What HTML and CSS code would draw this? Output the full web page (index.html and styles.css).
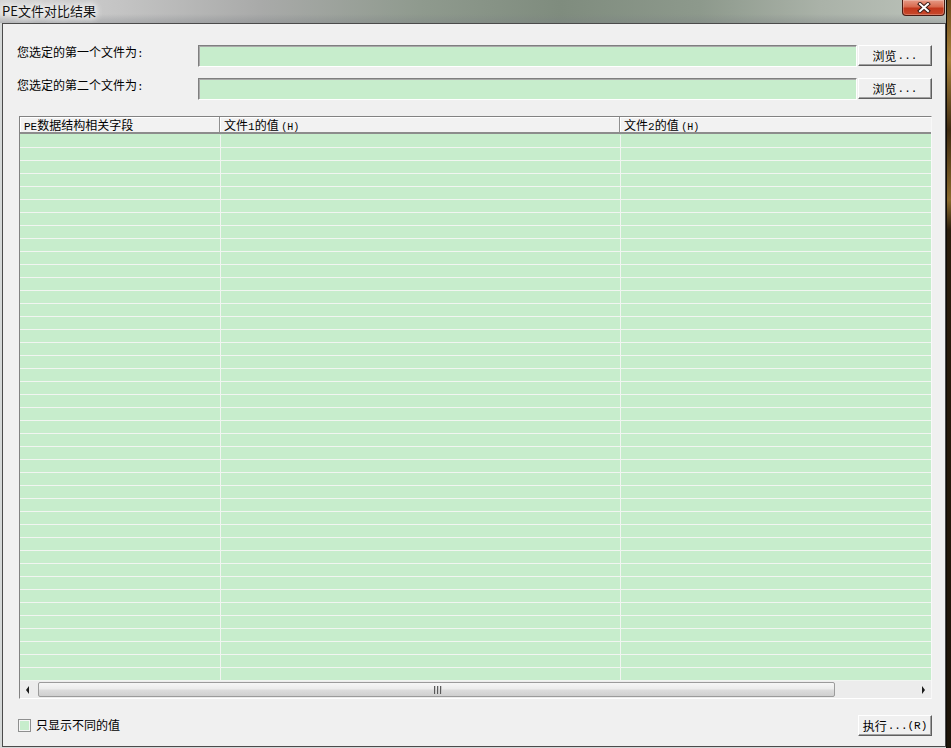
FILE: index.html
```html
<!DOCTYPE html>
<html lang="zh-CN">
<head>
<meta charset="utf-8">
<title>PE文件对比结果</title>
<link rel="stylesheet" href="styles.css">
</head>
<body>
<div class="screen">
  <div class="window">
    <div class="titlebar">
      <span class="title">PE文件对比结果</span>
      <button class="close" aria-label="关闭">
        <svg width="14" height="11" viewBox="0 0 14 11">
          <path d="M3 2 L11 9 M11 2 L3 9" stroke="#3a1a14" stroke-width="4" stroke-linecap="square" fill="none"/>
          <path d="M3 2 L11 9 M11 2 L3 9" stroke="#ffffff" stroke-width="2" stroke-linecap="square" fill="none"/>
        </svg>
      </button>
    </div>
    <div class="frame">
      <div class="client">
        <div class="file-row">
          <span class="label">您选定的第一个文件为<span class="hw">:</span></span>
          <div class="field"></div>
          <button class="btn">浏览<span class="hw dots">...</span></button>
        </div>
        <div class="file-row second">
          <span class="label">您选定的第二个文件为<span class="hw">:</span></span>
          <div class="field"></div>
          <button class="btn">浏览<span class="hw dots">...</span></button>
        </div>

        <div class="listview">
          <div class="lv-head">
            <div class="hcell c1"><span class="hw">PE</span>数据结构相关字段</div>
            <div class="hcell c2">文件<span class="hw">1</span>的值 <span class="hw small">(H)</span></div>
            <div class="hcell c3">文件<span class="hw">2</span>的值 <span class="hw small">(H)</span></div>
          </div>
          <div class="lv-body">
            <div class="col c1"></div>
            <div class="col c2"></div>
            <div class="col c3"></div>
          </div>
          <div class="hscroll">
            <div class="arrow left"></div>
            <div class="track">
              <div class="thumb"><span class="grip"><i></i><i></i><i></i></span></div>
            </div>
            <div class="arrow right"></div>
          </div>
        </div>

        <div class="footer">
          <label class="check"><span class="box"></span><span class="check-label">只显示不同的值</span></label>
          <button class="btn">执行<span class="hw dots">...</span><span class="hw">(R)</span></button>
        </div>
      </div>
    </div>
  </div>
  <div class="desktop"></div>
</div>
</body>
</html>
```

FILE: styles.css
```css
html, body {
  margin: 0;
  padding: 0;
}

body {
  width: 951px;
  height: 748px;
  overflow: hidden;
  font-family: "Noto Sans CJK SC", "Noto Sans", sans-serif;
  font-size: 12px;
  color: #000;
}

.screen {
  display: flex;
  width: 951px;
  height: 748px;
  background: #2a1d0c;
}

.window {
  width: 946px;
  height: 748px;
  display: flex;
  flex-direction: column;
  background: #3b3f44;
}

/* ---------- title bar ---------- */
.titlebar {
  height: 23px;
  flex: none;
  display: flex;
  justify-content: space-between;
  align-items: flex-start;
  background:
    linear-gradient(to bottom, rgba(255,255,255,0) 0, rgba(255,255,255,0) 14px, rgba(120,124,130,0.35) 23px),
    linear-gradient(to right, #d6d6d6 0, #c4c4c4 120px, #a9aaa9 260px, #8f9a8e 420px, #7f8c7e 560px, #8d998c 700px, #aab2a8 820px, #bcc3bb 946px);
}

.title {
  margin: 2px 0 0 2px;
  font-size: 13px;
  line-height: 17px;
  color: #111;
  text-shadow: 0 0 6px #fff, 0 0 8px #fff, 0 0 10px #fff;
}

.close {
  width: 43px;
  height: 16px;
  margin-right: 1px;
  padding: 0;
  border: 1px solid #4a1b12;
  border-top: none;
  border-radius: 0 0 4px 4px;
  background: linear-gradient(to bottom, #e69a86 0, #d86a4f 45%, #c2371c 55%, #c84a2c 100%);
  box-shadow: inset 0 0 0 1px rgba(255,255,255,0.25);
  display: flex;
  align-items: center;
  justify-content: center;
}

.close svg {
  display: block;
}

/* ---------- frame & client ---------- */
.frame {
  flex: 1;
  display: flex;
  padding-left: 2px;
  padding-bottom: 1px;
  background: #d5d8d8;
}

.client {
  width: 942px;
  border: 1px solid #4b4b4b;
  background: #f0f0f0;
  padding: 21px 0 0 14px;
  display: flex;
  flex-direction: column;
}

.hw {
  font-family: "Liberation Mono", monospace;
  font-size: 11px;
}

.hw.small {
  font-size: 10px;
}

.file-row {
  display: flex;
  align-items: center;
  height: 22px;
}

.file-row.second {
  margin-top: 11px;
}

.label {
  width: 181px;
  align-self: flex-start;
  line-height: 14px;
  white-space: nowrap;
}

.field {
  width: 657px;
  height: 20px;
  border: 1px solid;
  border-color: #7f7f7f #ffffff #ffffff #7f7f7f;
  box-shadow: inset 1px 1px 0 #a9a9a9;
  background: #c7edcc;
}

.btn {
  margin: 0 0 0 1px;
  width: 74px;
  height: 21px;
  align-self: flex-start;
  padding: 0;
  border: 1px solid;
  border-color: #ffffff #5f5f5f #5f5f5f #ffffff;
  box-shadow: inset -1px -1px 0 #a0a0a0;
  background: #f0f0f0;
  font-family: "Noto Sans CJK SC", sans-serif;
  font-size: 12px;
  line-height: 18px;
  color: #000;
  display: flex;
  align-items: center;
  justify-content: center;
}

.dots {
  margin-left: 1px;
}

/* ---------- list view ---------- */
.listview {
  margin: 16px 0 0 2px;
  width: 911px;
  border: 1px solid;
  border-color: #828282 #f8f8f8 #ffffff #828282;
  display: flex;
  flex-direction: column;
}

.lv-head {
  height: 15px;
  display: flex;
  border-bottom: 2px solid #8c8c8c;
  background: #f2f2f2;
}

.hcell {
  height: 15px;
  line-height: 15px;
  white-space: nowrap;
  overflow: hidden;
  padding-left: 4px;
  border-right: 1px solid #8f8f8f;
  box-shadow: inset 1px 1px 0 #ffffff;
}

.hcell.c1 { width: 195px; }
.hcell.c2 { width: 395px; }
.hcell.c3 { flex: 1; border-right: none; }

.lv-body {
  height: 546px;
  display: flex;
  border-top: 1px solid #c7edcc;
  background-color: #c7edcc;
  background-image: repeating-linear-gradient(to bottom, #c7edcc 0, #c7edcc 12px, #f1f5f1 12px, #f1f5f1 13px);
}

.col {
  height: 100%;
}

.col.c1 { width: 200px; border-right: 1px solid #f1f5f1; }
.col.c2 { width: 399px; border-right: 1px solid #f1f5f1; }
.col.c3 { flex: 1; }

/* ---------- horizontal scrollbar ---------- */
.hscroll {
  height: 17px;
  display: flex;
  align-items: center;
  background: #ececec;
}

.arrow {
  width: 17px;
  height: 17px;
  position: relative;
  flex: none;
}

.arrow::after {
  content: "";
  position: absolute;
  top: 5px;
  width: 0;
  height: 0;
  border-top: 4px solid transparent;
  border-bottom: 4px solid transparent;
}

.arrow.left::after {
  left: 6px;
  border-right: 3px solid #1a1a1a;
}

.arrow.right::after {
  left: 8px;
  border-left: 3px solid #1a1a1a;
}

.track {
  flex: 1;
  height: 17px;
  display: flex;
  align-items: center;
}

.thumb {
  margin-left: 1px;
  width: 795px;
  height: 13px;
  border: 1px solid #9b9b9b;
  border-radius: 2px;
  background: linear-gradient(to bottom, #f6f6f6 0, #ececec 45%, #dcdcdc 55%, #cfcfcf 100%);
  display: flex;
  align-items: center;
  justify-content: center;
}

.grip {
  display: flex;
  gap: 1px;
  margin-left: 2px;
}

.grip i {
  display: block;
  width: 2px;
  height: 8px;
  background: linear-gradient(to right, #5a5a5a 0, #5a5a5a 1px, #c8c8c8 1px);
}

/* ---------- footer ---------- */
.footer {
  margin: 16px 0 0 1px;
  width: 914px;
  display: flex;
  justify-content: space-between;
  align-items: flex-start;
}

.check {
  display: flex;
  align-items: center;
  margin-top: 3px;
}

.box {
  width: 11px;
  height: 11px;
  border: 1px solid #8e8f8f;
  box-shadow: inset 0 0 0 1px #f6f6f6;
  background: #c7edcc;
}

.check-label {
  margin-left: 5px;
  line-height: 14px;
}

/* ---------- desktop strip ---------- */
.desktop {
  width: 5px;
  height: 748px;
  border-left: 1px solid #0e0a05;
  background: linear-gradient(to bottom, #6b4a1c 0, #a8823a 60px, #3e2a10 130px, #8a6a2c 200px, #2a1d0c 230px, #1c1409 748px);
}
```
